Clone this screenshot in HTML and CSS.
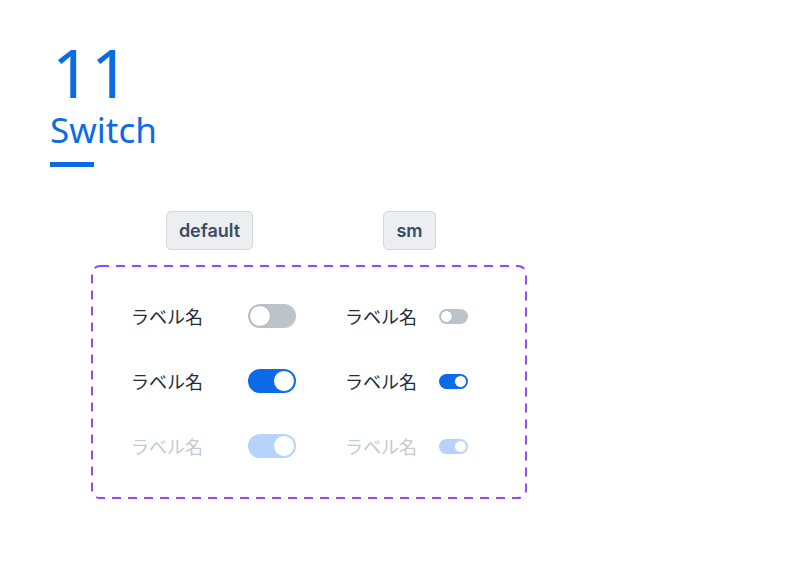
FILE: index.html
```html
<!DOCTYPE html>
<html lang="ja">
<head>
    <meta charset="UTF-8">
    <meta name="viewport" content="width=device-width, initial-scale=1.0">
    <title>Switch</title>
    <link rel="stylesheet" href="styles.css">
</head>
<body>
    <header class="title">
        <div class="title-number">11</div>
        <div class="title-name">Switch</div>
        <div class="title-bar"></div>
    </header>

    <section class="demo">
        <div class="variants">
            <div class="variant"><span class="badge">default</span></div>
            <div class="variant"><span class="badge">sm</span></div>
        </div>

        <div class="frame">
            <svg class="frame-border" width="100%" height="100%">
                <rect x="1" y="1" width="434" height="232" rx="8" ry="8"></rect>
            </svg>
            <div class="grid">
                <span class="label">ラベル名</span>
                <span class="switch"><span class="knob"></span></span>
                <span class="label">ラベル名</span>
                <span class="switch sm"><span class="knob"></span></span>

                <span class="label">ラベル名</span>
                <span class="switch on"><span class="knob"></span></span>
                <span class="label">ラベル名</span>
                <span class="switch sm on"><span class="knob"></span></span>

                <span class="label disabled">ラベル名</span>
                <span class="switch on disabled"><span class="knob"></span></span>
                <span class="label disabled">ラベル名</span>
                <span class="switch sm on disabled"><span class="knob"></span></span>
            </div>
        </div>
    </section>
</body>
</html>
```

FILE: styles.css
```css
body {
    margin: 0;
    padding: 0;
    background: #fff;
    font-family: "Noto Sans", "Noto Sans CJK JP", sans-serif;
}

.title {
    padding: 38px 0 0 50px;
    color: #0b6be6;
}

.title-number {
    font-size: 68px;
    line-height: 68px;
    padding-left: 2px;
}

.title-name {
    font-size: 35px;
    line-height: 44px;
    margin-top: 2px;
}

.title-bar {
    width: 44px;
    height: 5px;
    margin-top: 10px;
    background: #0b6be6;
}

.demo {
    width: 437px;
    margin: 44px 0 0 91px;
}

.variants {
    display: flex;
    justify-content: center;
}

.variant {
    width: 200px;
    display: flex;
    justify-content: center;
}

.badge {
    display: inline-block;
    height: 37px;
    line-height: 37px;
    padding: 0 12px;
    border: 1px solid #d3d7dc;
    border-radius: 5px;
    background: #eceef1;
    color: #3a4c64;
    font-family: Inter, "Noto Sans", sans-serif;
    font-size: 18px;
    font-weight: 600;
}

.frame {
    position: relative;
    margin-top: 15px;
    height: 235px;
    box-sizing: border-box;
    padding: 39px 0 0 40px;
}

.frame-border {
    position: absolute;
    top: 0;
    left: 0;
}

.frame-border rect {
    fill: none;
    stroke: #9747ff;
    stroke-width: 2;
    stroke-dasharray: 9 7;
}

.grid {
    display: grid;
    grid-template-columns: 117px 97px 94px 30px;
    grid-auto-rows: 24px;
    row-gap: 41px;
    align-items: center;
}

.label {
    font-family: "Noto Sans CJK JP", sans-serif;
    font-size: 18px;
    color: #1f2d3d;
    line-height: 24px;
}

.label.disabled {
    color: #c5cad0;
}

.switch {
    display: flex;
    align-items: center;
    width: 48px;
    height: 24px;
    box-sizing: border-box;
    padding: 1px;
    border-radius: 12px;
    background: #bcc3ca;
}

.knob {
    width: 22px;
    height: 22px;
    box-sizing: border-box;
    border-radius: 50%;
    background: #fff;
    border: 1px solid #a9b1b9;
}

.switch.on {
    justify-content: flex-end;
    background: #0b6be6;
}

.switch.on .knob {
    border-color: #0b6be6;
}

.switch.disabled {
    background: #b5d3fb;
}

.switch.disabled .knob {
    border-color: #b5d3fb;
}

.switch.sm {
    width: 29px;
    height: 15px;
    border-radius: 8px;
}

.switch.sm .knob {
    width: 13px;
    height: 13px;
}
```
